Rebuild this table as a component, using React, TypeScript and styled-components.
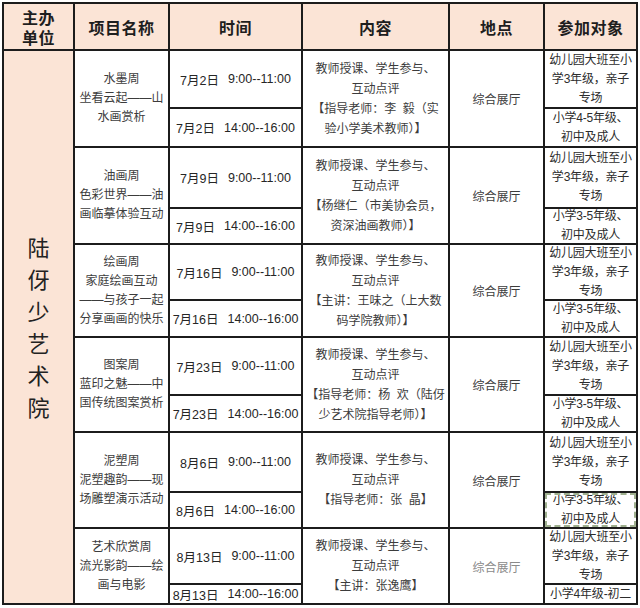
import React from "react";
import styled, { createGlobalStyle } from "styled-components";

const GlobalStyle = createGlobalStyle`
    html, body {
        margin: 0;
        padding: 0;
        background: #ffffff;
    }
    body {
        font-family: "Liberation Sans", "Noto Sans CJK SC", sans-serif;
        color: #333;
    }
`;

const PINK = "#fbe4d6";
const LINE = "#1c1c1c";

// row heights: header, then two sub rows per session
const TRACKS = "45px 56px 37px 59px 34px 54px 35px 56px 35px 58px 34px 54px 18px";

const Table = styled.div`
    display: grid;
    grid-template-columns: 69px 93px 131px 145px 93px 91px;
    grid-template-rows: ${TRACKS};
    gap: 2px;
    padding: 2px;
    margin: 2px 0 0 2px;
    width: max-content;
    background: ${LINE};
`;

const Cell = styled.div`
    display: flex;
    align-items: center;
    justify-content: center;
    text-align: center;
    background: #ffffff;
    overflow: hidden;
`;

const HeadCell = styled(Cell)`
    background: ${PINK};
    font-family: "Noto Sans CJK SC", sans-serif;
    font-size: 16px;
    font-weight: 700;
    line-height: 20px;
    color: #1e1e1e;
    letter-spacing: 0.5px;
`;

const OrgCell = styled(Cell)`
    grid-column: 1;
    grid-row: 2 / span 12;
    background: ${PINK};
`;

const OrgText = styled.div`
    writing-mode: vertical-rl;
    font-family: "Noto Sans CJK SC", sans-serif;
    font-size: 22px;
    letter-spacing: 10px;
    color: #222;
    margin-top: 12px;
`;

const NameCell = styled(Cell)<{ $row: number }>`
    grid-column: 2;
    grid-row: ${p => p.$row} / span 2;
    font-size: 12px;
    line-height: 19px;
    color: #3c3c3c;
    white-space: nowrap;
`;

const TimeCell = styled(Cell)<{ $row: number }>`
    grid-column: 3;
    grid-row: ${p => p.$row};
    font-size: 12.5px;
    color: #262626;
    white-space: nowrap;
`;

const TimeGap = styled.span`
    display: inline-block;
    width: 9px;
`;

const ContentCell = styled(Cell)<{ $row: number }>`
    grid-column: 4;
    grid-row: ${p => p.$row} / span 2;
    font-size: 12px;
    line-height: 20px;
    color: #3c3c3c;
    white-space: pre;
`;

const PlaceCell = styled(Cell)<{ $row: number; $faded?: boolean }>`
    grid-column: 5;
    grid-row: ${p => p.$row} / span 2;
    font-size: 12px;
    color: ${p => (p.$faded ? "#8a8a8a" : "#3c3c3c")};
`;

const TargetCell = styled(Cell)<{ $row: number; $dashed?: boolean }>`
    grid-column: 6;
    grid-row: ${p => p.$row};
    font-size: 12px;
    line-height: 19px;
    letter-spacing: -0.2px;
    color: #2c2c2c;
    white-space: nowrap;
    box-sizing: border-box;
    border: ${p => (p.$dashed ? "2px dashed #9fb08f" : "none")};
`;

type Session = {
    name: string[];
    date: string;
    content: string[];
    lower: string[];
};

const TOP_TARGET = ["幼儿园大班至小", "学3年级，亲子", "专场"];

const sessions: Session[] = [
    {
        name: ["水墨周", "坐看云起——山", "水画赏析"],
        date: "7月2日",
        content: ["教师授课、学生参与、", "互动点评", "【指导老师：李  毅（实", "验小学美术教师）】"],
        lower: ["小学4-5年级、", "初中及成人"],
    },
    {
        name: ["油画周", "色彩世界——油", "画临摹体验互动"],
        date: "7月9日",
        content: ["教师授课、学生参与、", "互动点评", "【杨继仁（市美协会员，", "资深油画教师）】"],
        lower: ["小学3-5年级、", "初中及成人"],
    },
    {
        name: ["绘画周", "家庭绘画互动", "——与孩子一起", "分享画画的快乐"],
        date: "7月16日",
        content: ["教师授课、学生参与、", "互动点评", "【主讲：王味之（上大数", "码学院教师）】"],
        lower: ["小学3-5年级、", "初中及成人"],
    },
    {
        name: ["图案周", "蓝印之魅——中", "国传统图案赏析"],
        date: "7月23日",
        content: ["教师授课、学生参与、", "互动点评", "【指导老师：杨  欢（陆伢", "少艺术院指导老师）】"],
        lower: ["小学3-5年级、", "初中及成人"],
    },
    {
        name: ["泥塑周", "泥塑趣韵——现", "场雕塑演示活动"],
        date: "8月6日",
        content: ["教师授课、学生参与、", "互动点评", "【指导老师：张  晶】"],
        lower: ["小学3-5年级、", "初中及成人"],
    },
    {
        name: ["艺术欣赏周", "流光影韵——绘", "画与电影"],
        date: "8月13日",
        content: ["教师授课、学生参与、", "互动点评", "【主讲：张逸鹰】"],
        lower: ["小学4年级-初二"],
    },
];

function Lines({ lines }: { lines: string[] }) {
    return (
        <div>
            {lines.map((l, i) => (
                <div key={i}>{l}</div>
            ))}
        </div>
    );
}

export default function App() {
    return (
        <>
            <GlobalStyle />
            <Table>
                <HeadCell>
                    <div>主办<br />单位</div>
                </HeadCell>
                <HeadCell>项目名称</HeadCell>
                <HeadCell>时间</HeadCell>
                <HeadCell>内容</HeadCell>
                <HeadCell>地点</HeadCell>
                <HeadCell>参加对象</HeadCell>

                <OrgCell>
                    <OrgText>陆伢少艺术院</OrgText>
                </OrgCell>

                {sessions.map((s, i) => {
                    const row = 2 + i * 2;
                    return (
                        <React.Fragment key={s.date}>
                            <NameCell $row={row}>
                                <Lines lines={s.name} />
                            </NameCell>
                            <TimeCell $row={row}>
                                {s.date}<TimeGap />9:00--11:00
                            </TimeCell>
                            <TimeCell $row={row + 1}>
                                {s.date}<TimeGap />14:00--16:00
                            </TimeCell>
                            <ContentCell $row={row}>
                                <Lines lines={s.content} />
                            </ContentCell>
                            <PlaceCell $row={row} $faded={i === 5}>综合展厅</PlaceCell>
                            <TargetCell $row={row}>
                                <Lines lines={TOP_TARGET} />
                            </TargetCell>
                            <TargetCell $row={row + 1} $dashed={i === 4}>
                                <Lines lines={s.lower} />
                            </TargetCell>
                        </React.Fragment>
                    );
                })}
            </Table>
        </>
    );
}
